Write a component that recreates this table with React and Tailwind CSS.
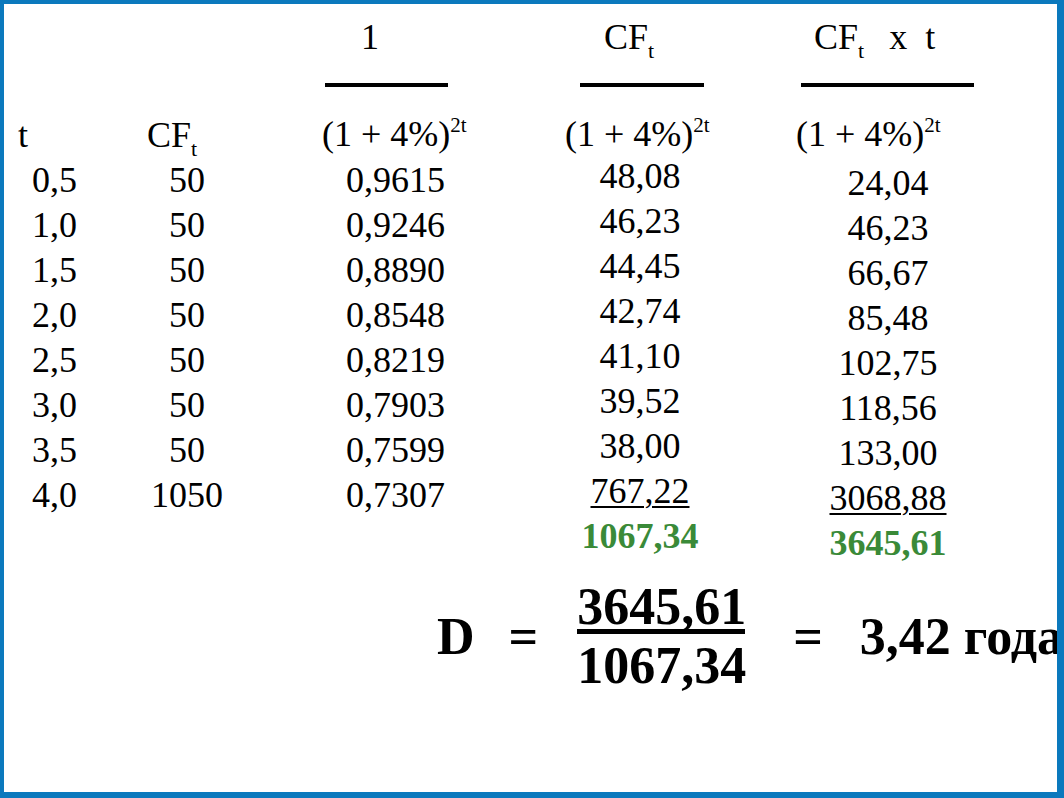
import React from "react";

const serif = { fontFamily: '"Liberation Serif", "Times New Roman", serif' };

function Sub() {
  return <span className="relative top-[9px] text-[22px]">t</span>;
}

function Denom() {
  return (
    <span>
      (1 + 4%)<span className="relative top-[-14px] text-[21px]">2t</span>
    </span>
  );
}

function Line({ children, className = "" }) {
  return <div className={`h-[45px] leading-[45px] whitespace-nowrap ${className}`}>{children}</div>;
}

const tVals = ["0,5", "1,0", "1,5", "2,0", "2,5", "3,0", "3,5", "4,0"];
const cfVals = ["50", "50", "50", "50", "50", "50", "50", "1050"];
const dVals = ["0,9615", "0,9246", "0,8890", "0,8548", "0,8219", "0,7903", "0,7599", "0,7307"];
const pvVals = ["48,08", "46,23", "44,45", "42,74", "41,10", "39,52", "38,00"];
const ptVals = ["24,04", "46,23", "66,67", "85,48", "102,75", "118,56", "133,00"];

export default function App() {
  return (
    <div className="w-[1064px] h-[798px] bg-white overflow-hidden border-solid border-[#0b79bd] border-l-4 border-t-4 border-r-[7px] border-b-[6px] text-black text-[36px]" style={serif}>
      <div className="flex items-start">
        {/* t column */}
        <div className="w-[106px] pt-[109px] flex flex-col">
          <Line className="pl-[14px]">t</Line>
          <div className="flex flex-col">
            {tVals.map((v, i) => (
              <Line key={i} className="pl-[28px]">{v}</Line>
            ))}
          </div>
        </div>
        {/* CF column */}
        <div className="w-[154px] pt-[109px] flex flex-col">
          <Line className="pl-[37px]">CF<Sub /></Line>
          <div className="flex flex-col">
            {cfVals.map((v, i) => (
              <Line key={i} className="text-center">{v}</Line>
            ))}
          </div>
        </div>
        {/* discount factor column */}
        <div className="w-[266px] pt-[11px] flex flex-col">
          <Line className="pl-[97px]">1</Line>
          <div className="mt-[23px] ml-[61px] w-[123px] h-[4px] bg-black" />
          <Line className="mt-[25px] pl-[58px]"><Denom /></Line>
          <div className="mt-[1px] flex flex-col">
            {dVals.map((v, i) => (
              <Line key={i} className="pl-[82px]">{v}</Line>
            ))}
          </div>
        </div>
        {/* PV column */}
        <div className="w-[220px] pt-[11px] flex flex-col">
          <Line className="pl-[74px]">CF<Sub /></Line>
          <div className="mt-[23px] ml-[50px] w-[124px] h-[4px] bg-black" />
          <Line className="mt-[25px] pl-[35px]"><Denom /></Line>
          <div className="mt-[-3px] flex flex-col">
            {pvVals.map((v, i) => (
              <Line key={i} className="text-center">{v}</Line>
            ))}
            <Line className="text-center"><span className="underline decoration-2 underline-offset-[3px]">767,22</span></Line>
            <Line className="text-center font-bold text-[#3a8a38]">1067,34</Line>
          </div>
        </div>
        {/* PV x t column */}
        <div className="w-[276px] pt-[11px] flex flex-col">
          <Line className="pl-[64px]">
            CF<Sub /><span className="ml-[25px]">x</span><span className="ml-[18px]">t</span>
          </Line>
          <div className="mt-[23px] ml-[51px] w-[173px] h-[4px] bg-black" />
          <Line className="mt-[25px] pl-[46px]"><Denom /></Line>
          <div className="mt-[4px] flex flex-col">
            {ptVals.map((v, i) => (
              <Line key={i} className="text-center">{v}</Line>
            ))}
            <Line className="text-center"><span className="underline decoration-2 underline-offset-[3px]">3068,88</span></Line>
            <Line className="text-center font-bold text-[#3a8a38]">3645,61</Line>
          </div>
        </div>
      </div>
      {/* Duration formula */}
      <div className="mt-[21px] pl-[433px] flex items-center font-bold text-[52px] leading-[40px] whitespace-nowrap">
        <span>D</span>
        <span className="ml-[34px]">=</span>
        <div className="ml-[39px] w-[168px] flex flex-col">
          <div className="h-[40px]">3645,61</div>
          <div className="mt-[2px] h-[5px] bg-black" />
          <div className="mt-[12px] h-[40px]">1067,34</div>
        </div>
        <span className="ml-[48px]">=</span>
        <span className="ml-[37px]">3,42 года</span>
      </div>
    </div>
  );
}
